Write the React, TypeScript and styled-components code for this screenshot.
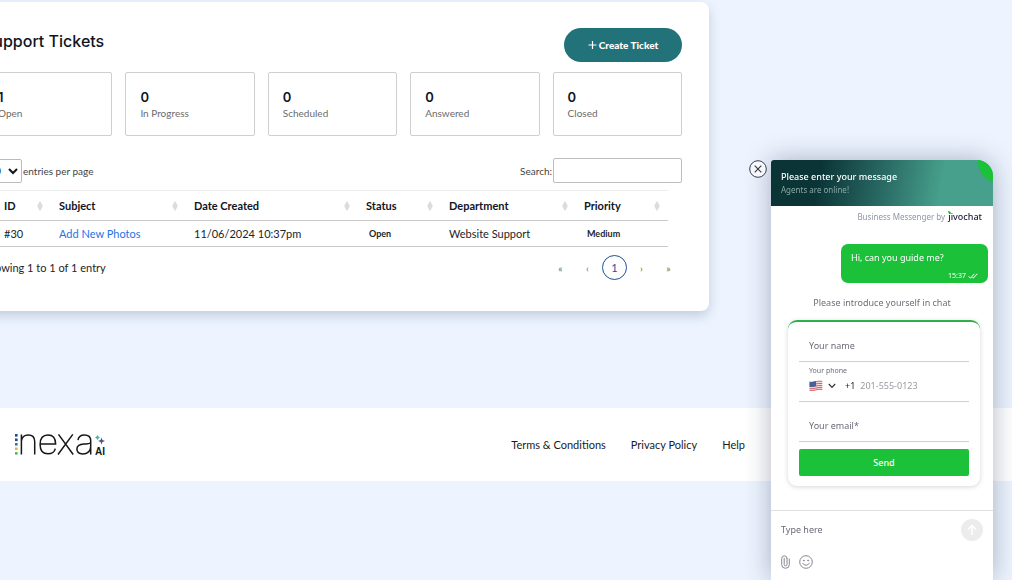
import React from "react";
import styled, { createGlobalStyle, css } from "styled-components";

const Global = createGlobalStyle`
  * { box-sizing: border-box; }
  html, body { margin: 0; min-height: 100%; }
  body {
    background: #edf4ff;
    font-family: Lato, sans-serif;
    font-size: 11px;
    line-height: 16px;
    color: #212529;
    overflow-x: hidden;
  }
  button, input, select, textarea { font: inherit; color: inherit; }
`;

const Page = styled.div`
  overflow: hidden;
`;

const Main = styled.main`
  padding: 2px 303px 97px 0;
  margin-left: -44px;
`;

const Panel = styled.section`
  background: #fff;
  border-radius: 8px;
  padding: 26px 27px 31px;
  box-shadow: 0 5px 12px rgba(40, 70, 110, 0.22);
`;

const PanelHead = styled.header`
  display: flex;
  justify-content: space-between;
  align-items: center;
  margin-bottom: 10px;
`;

const Title = styled.h1`
  margin: 0;
  padding-bottom: 8px;
  font-family: Inter, sans-serif;
  font-size: 16px;
  line-height: 20px;
  font-weight: 500;
  color: #10151f;
`;

const CreateButton = styled.button`
  display: flex;
  align-items: center;
  justify-content: center;
  gap: 2px;
  width: 118px;
  height: 34px;
  border: 0;
  border-radius: 17px;
  background: #22727a;
  color: #fff;
  font-size: 10px;
  font-weight: 900;
`;

const Stats = styled.ul`
  display: grid;
  grid-template-columns: repeat(5, 1fr);
  gap: 13px;
  margin: 0;
  padding: 0;
  list-style: none;
`;

const Stat = styled.li`
  height: 64px;
  padding: 16px 14px;
  border: 1px solid #cfcfcf;
  border-radius: 2px;
`;

const StatValue = styled.strong`
  display: block;
  font-family: Inter, sans-serif;
  font-size: 13px;
  font-weight: 600;
  color: #10151f;
`;

const StatLabel = styled.span`
  display: block;
  font-size: 10px;
  color: #6b6b6b;
`;

const Controls = styled.div`
  display: flex;
  justify-content: space-between;
  align-items: center;
  margin: 22px 0 7px;
  font-size: 10px;
  color: #444;
`;

const Control = styled.label`
  display: flex;
  align-items: center;
  gap: 1px;
`;

const PageSize = styled.select`
  width: 39px;
  height: 24px;
  padding: 0;
  border: 1px solid #bbb;
  border-radius: 2px;
  background: #fff;
  color: #10151f;
  font-size: 11px;
`;

const SearchBox = styled.input`
  width: 129px;
  height: 25px;
  border: 1px solid #bdbdbd;
  border-radius: 2px;
  background: #fff;
`;

const TableWrap = styled.div`
  padding-right: 14px;
`;

const Table = styled.table`
  width: 100%;
  table-layout: fixed;
  border-collapse: collapse;
  border-top: 1px solid #ededed;
`;

const cell = css`
  padding: 0 8px;
  text-align: left;
  white-space: nowrap;
  border-bottom: 1px solid #c9c9c9;
  &:first-child { padding-left: 21px; }
`;

const Th = styled.th`
  ${cell}
  height: 30px;
  font-weight: 700;
  color: #10151f;
`;

const Td = styled.td`
  ${cell}
  height: 26px;
`;

const ThInner = styled.span`
  display: flex;
  justify-content: space-between;
  align-items: center;
`;

const Badge = styled.span`
  padding-left: 3px;
  font-size: 9px;
  font-weight: 700;
`;

const SubjectLink = styled.a`
  color: #2474e8;
  text-decoration: none;
`;

const TableFoot = styled.div`
  display: flex;
  justify-content: space-between;
  align-items: center;
  height: 25px;
  margin-top: 8px;
`;

const Pager = styled.nav`
  display: flex;
  align-items: center;
  gap: 2px;
  padding-right: 1px;
`;

const PageButton = styled.button<{ $current?: boolean }>`
  width: 25px;
  height: 25px;
  padding: 0;
  border: ${(p) => (p.$current ? "1px solid #1d4f9c" : "0")};
  border-radius: 50%;
  background: none;
  color: ${(p) => (p.$current ? "#1d4f9c" : "#666")};
  font-size: ${(p) => (p.$current ? "11px" : "10px")};
`;

const Footer = styled.footer`
  display: flex;
  align-items: center;
  justify-content: space-between;
  height: 73px;
  padding: 0 267px 0 14px;
  background: #fff;
`;

const FooterLinks = styled.nav`
  display: flex;
  gap: 25px;
`;

const FooterLink = styled.a`
  color: #1b1b1b;
  text-decoration: none;
`;

const Chat = styled.aside`
  position: fixed;
  top: 160px;
  right: 19px;
  bottom: 0;
  width: 222px;
  display: flex;
  flex-direction: column;
  background: #fff;
  border-radius: 3px 16px 0 0;
  box-shadow: 0 0 26px rgba(30, 40, 70, 0.34);
  font-family: "Noto Sans", sans-serif;
  font-size: 9px;
  line-height: 14px;
`;

const CloseButton = styled.button`
  position: absolute;
  top: 0;
  left: -22px;
  width: 18px;
  height: 18px;
  padding: 0;
  border: 0;
  background: none;
`;

const ChatHead = styled.header`
  position: relative;
  height: 46px;
  padding: 10px 10px 0;
  overflow: hidden;
  border-radius: 3px 16px 0 0;
  background: linear-gradient(100deg, #0b3437 22%, #2b6d66 52%, #46a08b 76%);
  color: #fff;
`;

const ChatTitle = styled.h2`
  margin: 0;
  font-size: 9px;
  line-height: 14px;
  font-weight: 500;
`;

const ChatStatus = styled.p`
  margin: 0;
  font-size: 8px;
  line-height: 12px;
  color: #86a9a6;
`;

const Corner = styled.svg`
  position: absolute;
  top: 0;
  right: 0;
`;

const ChatBody = styled.div`
  flex: 1;
  display: flex;
  flex-direction: column;
  padding: 4px 5px 0;
`;

const Brand = styled.p`
  display: flex;
  justify-content: flex-end;
  gap: 3px;
  margin: 0 6px 20px;
  font-size: 8px;
  color: #8d97a8;
`;

const BrandName = styled.a`
  color: #1c1836;
  font-size: 9px;
  font-weight: 500;
  text-decoration: none;
`;

const BrandInitial = styled.span`
  position: relative;
  &::before {
    content: "";
    position: absolute;
    top: 1px;
    left: 0;
    width: 3px;
    height: 3px;
    border-radius: 0 3px 0 3px;
    background: #1bc239;
  }
`;

const Bubble = styled.div`
  align-self: flex-end;
  width: 147px;
  height: 39px;
  padding: 7px 10px 0;
  border-radius: 7px;
  background: #1bc239;
  color: #fff;
`;

const BubbleMeta = styled.div`
  display: flex;
  justify-content: flex-end;
  align-items: center;
  gap: 2px;
  margin-top: 5px;
  font-size: 7px;
  line-height: 12px;
`;

const Intro = styled.p`
  margin: 13px 0 10px;
  text-align: center;
  color: #6b6f7b;
`;

const Form = styled.form`
  margin: 0 8px 0 12px;
  padding: 0 11px 10px;
  border-top: 2px solid #2fae4b;
  border-radius: 9px;
  box-shadow: 0 1px 5px rgba(0, 0, 0, 0.16);
`;

const Field = styled.div`
  display: flex;
  flex-direction: column;
  justify-content: flex-end;
  height: 40px;
  padding: 0 10px 8px;
  border-bottom: 1px solid #cfcfcf;
`;

const TextInput = styled.input`
  min-width: 0;
  width: 100%;
  height: 14px;
  padding: 0;
  border: 0;
  outline: 0;
  background: none;
  &::placeholder { color: #6b6b7a; opacity: 1; }
`;

const PhoneInput = styled(TextInput)`
  &::placeholder { color: #9a9aa2; }
`;

const PhoneLabel = styled.label`
  margin-bottom: 3px;
  font-size: 7px;
  line-height: 10px;
  color: #6b6b7a;
`;

const PhoneRow = styled.div`
  display: flex;
  align-items: center;
  gap: 5px;
`;

const CountryButton = styled.button`
  display: flex;
  align-items: center;
  gap: 5px;
  padding: 0;
  margin-right: 4px;
  border: 0;
  background: none;
`;

const SendButton = styled.button`
  width: 100%;
  height: 27px;
  margin-top: 7px;
  border: 0;
  border-radius: 2px;
  background: #1bc239;
  color: #fff;
  font-weight: 500;
`;

const Composer = styled.div`
  height: 70px;
  padding: 8px 10px 0;
  border-top: 1px solid #dfdfdf;
`;

const ComposerRow = styled.div`
  display: flex;
  align-items: center;
  gap: 8px;
`;

const RoundButton = styled.button`
  display: flex;
  align-items: center;
  justify-content: center;
  flex: none;
  width: 22px;
  height: 22px;
  padding: 0;
  border: 0;
  border-radius: 50%;
  background: #ececec;
`;

const Tools = styled.div`
  display: flex;
  gap: 9px;
  margin-top: 14px;
`;

const ToolButton = styled.button`
  display: flex;
  padding: 0;
  border: 0;
  background: none;
`;

const SortIcon = () => (
  <svg width="6" height="12" viewBox="0 0 6 12" aria-hidden="true">
    <path d="M3 .8 5.800 6 3 11.200.2 6z" fill="#dcdcdc" />
  </svg>
);

const NexaLogo = () => (
  <svg width="92" height="24" viewBox="0 0 92 24" role="img" aria-label="nexa AI">
    <g>
      <rect x="1" y="1" width="2.6" height="2.6" fill="#214a8c" />
      <rect x="1" y="5.5" width="2.6" height="2.6" fill="#214a8c" />
      <rect x="1" y="10" width="2.6" height="2.6" fill="#2b7f91" />
      <rect x="1" y="14.5" width="2.6" height="2.6" fill="#e6b34a" />
      <rect x="1" y="19" width="2.6" height="2.6" fill="#56b55c" />
    </g>
    <g fill="none" stroke="#171717" strokeWidth="1.5">
      <path d="M7.4 21.5V1.4M7.4 8C8 3.7 10.7 1.9 14.2 1.9c4.4 0 6.5 2.2 6.5 6.5v13.1" />
      <path d="M26.4 11h15.2C41.600 5 39 1.900 34 1.900s-7.900 3.600-7.900 9.500 2.900 9.400 7.900 9.400c3.900 0 6.500-1.800 7.300-5.200" />
      <path d="M44.500 1.400 59.200 21.500M58.800 1.400 44 21.500" />
      <path d="M64 7.200c.5-3.500 2.700-5.300 6.300-5.300 4.300 0 6.400 1.900 6.400 5.700v13.900M76.700 9.600c-1 1.300-3.300 1.200-6.800 1.500-4.600.4-7 1.900-7 5 0 3.200 2.100 4.800 5.800 4.800 4.900 0 8-2.900 8-7.600" />
    </g>
    <path d="m83.500 2.500.7 1.300 1.300.7-1.300.7-.7 1.300-.7-1.300-1.300-.7 1.300-.7z" fill="#3fb39b" stroke="#3fb39b" strokeWidth=".6" />
    <path d="m87.500 4.500.9 2.600 2.600.9-2.600.9-.9 2.600-.9-2.600-2.600-.9 2.600-.9z" fill="#4c4f8c" />
    <text x="81" y="21.500" fontFamily="Liberation Sans, sans-serif" fontSize="10" fontWeight="700" fill="#171717">AI</text>
  </svg>
);

const FlagIcon = () => (
  <svg width="14" height="12" viewBox="0 0 14 12" aria-hidden="true">
    <path d="M.5 1.800C5 3 8.500-.3 13.300 1v9C9 8.700 5.300 12 .5 10.700z" fill="#f1e3e6" />
    <g fill="none" stroke="#d2616b" strokeWidth="1">
      <path d="M.5 2.200C5 3.400 8.500.1 13.300 1.400M.5 4.400C5 5.600 8.500 2.300 13.300 3.600M.5 6.500C5 7.700 8.500 4.400 13.300 5.700M.5 8.500c4.500 1.200 8-2.100 12.800-.8M.5 10.300c4.500 1.200 8-2.100 12.800-.8" />
    </g>
    <path d="M.5 1.700c2.300.6 4.300.1 6.500-.6v5C4.800 6.900 2.800 7.300.5 6.700z" fill="#45629c" />
  </svg>
);

const stats = [
  ["1", "Open"],
  ["0", "In Progress"],
  ["0", "Scheduled"],
  ["0", "Answered"],
  ["0", "Closed"],
];

const columns: [string, number][] = [
  ["ID", 68],
  ["Subject", 135],
  ["Date Created", 172],
  ["Status", 83],
  ["Department", 135],
  ["Priority", 92],
];

export default function App() {
  return (
    <Page>
      <Global />
      <Main>
        <Panel>
          <PanelHead>
            <Title>Support Tickets</Title>
            <CreateButton type="button">
              <svg width="9" height="10" viewBox="0 0 9 10" aria-hidden="true">
                <path d="M4.500 1v8M.5 5h8" stroke="#fff" strokeWidth="1.200" />
              </svg>
              Create Ticket
            </CreateButton>
          </PanelHead>
          <Stats>
            {stats.map(([value, label]) => (
              <Stat key={label}>
                <StatValue>{value}</StatValue>
                <StatLabel>{label}</StatLabel>
              </Stat>
            ))}
          </Stats>
          <Controls>
            <Control>
              <PageSize defaultValue="10">
                <option>10</option>
                <option>25</option>
              </PageSize>
              entries per page
            </Control>
            <Control>
              Search:
              <SearchBox type="search" />
            </Control>
          </Controls>
          <TableWrap>
            <Table>
              <colgroup>
                {columns.map(([name, width]) => (
                  <col key={name} width={width} />
                ))}
              </colgroup>
              <thead>
                <tr>
                  {columns.map(([name]) => (
                    <Th key={name} scope="col">
                      <ThInner>
                        {name}
                        <SortIcon />
                      </ThInner>
                    </Th>
                  ))}
                </tr>
              </thead>
              <tbody>
                <tr>
                  <Td>#30</Td>
                  <Td><SubjectLink href="#30">Add New Photos</SubjectLink></Td>
                  <Td>11/06/2024 10:37pm</Td>
                  <Td><Badge>Open</Badge></Td>
                  <Td>Website Support</Td>
                  <Td><Badge>Medium</Badge></Td>
                </tr>
              </tbody>
            </Table>
          </TableWrap>
          <TableFoot>
            <span>Showing 1 to 1 of 1 entry</span>
            <Pager aria-label="Pages">
              <PageButton type="button">«</PageButton>
              <PageButton type="button">‹</PageButton>
              <PageButton type="button" $current>1</PageButton>
              <PageButton type="button">›</PageButton>
              <PageButton type="button">»</PageButton>
            </Pager>
          </TableFoot>
        </Panel>
      </Main>
      <Footer>
        <NexaLogo />
        <FooterLinks>
          <FooterLink href="#terms">Terms &amp; Conditions</FooterLink>
          <FooterLink href="#privacy">Privacy Policy</FooterLink>
          <FooterLink href="#help">Help</FooterLink>
        </FooterLinks>
      </Footer>
      <Chat>
        <CloseButton type="button" aria-label="Close chat">
          <svg width="18" height="18" viewBox="0 0 18 18" fill="none" stroke="#3a3d45">
            <circle cx="9" cy="9" r="8.300" fill="#f6f8fd" />
            <path d="m5.700 5.700 6.600 6.600M12.300 5.700l-6.600 6.600" strokeWidth="1.200" />
          </svg>
        </CloseButton>
        <ChatHead>
          <ChatTitle>Please enter your message</ChatTitle>
          <ChatStatus>Agents are online!</ChatStatus>
          <Corner width="16" height="22" viewBox="0 0 16 22" aria-hidden="true">
            <path d="M0 0h16v22C8 20 1 11 0 0z" fill="#1bc239" />
          </Corner>
        </ChatHead>
        <ChatBody>
          <Brand>
            Business Messenger by
            <BrandName href="#jivochat"><BrandInitial>j</BrandInitial>ivochat</BrandName>
          </Brand>
          <Bubble>
            Hi, can you guide me?
            <BubbleMeta>
              15:37
              <svg width="10" height="6" viewBox="0 0 10 6" fill="none" stroke="#fff" aria-hidden="true">
                <path d="m.7 3.300 1.800 1.900L6.300.8M4.500 4.500l.7.700L9.300.8" />
              </svg>
            </BubbleMeta>
          </Bubble>
          <Intro>Please introduce yourself in chat</Intro>
          <Form>
            <Field>
              <TextInput aria-label="Your name" placeholder="Your name" />
            </Field>
            <Field>
              <PhoneLabel htmlFor="phone">Your phone</PhoneLabel>
              <PhoneRow>
                <CountryButton type="button" aria-label="Country">
                  <FlagIcon />
                  <svg width="8" height="6" viewBox="0 0 8 6" fill="none" stroke="#333" strokeWidth="1.200">
                    <path d="m.8 1 3.200 3.400L7.200 1" />
                  </svg>
                </CountryButton>
                +1
                <PhoneInput id="phone" type="tel" placeholder="201-555-0123" />
              </PhoneRow>
            </Field>
            <Field>
              <TextInput type="email" aria-label="Your email" placeholder="Your email*" />
            </Field>
            <SendButton type="button">Send</SendButton>
          </Form>
        </ChatBody>
        <Composer>
          <ComposerRow>
            <TextInput aria-label="Message" placeholder="Type here" />
            <RoundButton type="button" aria-label="Send message">
              <svg width="12" height="12" viewBox="0 0 12 12" fill="none" stroke="#fff" strokeWidth="1.600">
                <path d="M6 11V1.500M2 5.500l4-4 4 4" />
              </svg>
            </RoundButton>
          </ComposerRow>
          <Tools>
            <ToolButton type="button" aria-label="Attach file">
              <svg width="9" height="14" viewBox="0 0 9 14" fill="none" stroke="#85888f" strokeLinecap="round">
                <path d="M6 3.500V9.500a1.400 1.400 0 0 1-2.800 0V3.200M6.100 3.500a2.500 2.500 0 0 0-5.400 0v6a3.800 3.800 0 0 0 7.600 0V4" />
              </svg>
            </ToolButton>
            <ToolButton type="button" aria-label="Emoji">
              <svg width="14" height="14" viewBox="0 0 14 14" fill="none" stroke="#85888f">
                <circle cx="7" cy="7" r="6.300" />
                <path d="M3.800 8.500c1.400 2.300 5 2.300 6.400 0" strokeLinecap="round" />
                <circle cx="4.900" cy="5.500" r=".5" fill="#85888f" />
                <circle cx="9.100" cy="5.500" r=".5" fill="#85888f" />
              </svg>
            </ToolButton>
          </Tools>
        </Composer>
      </Chat>
    </Page>
  );
}
